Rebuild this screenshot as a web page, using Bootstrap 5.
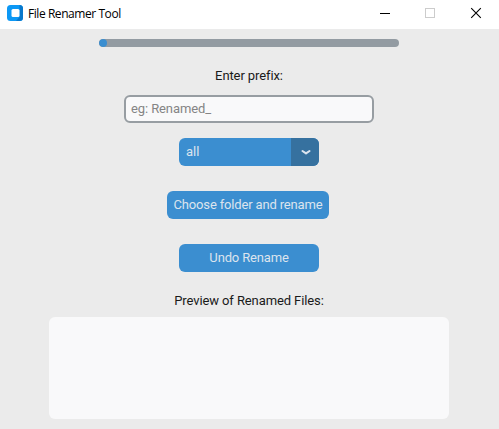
<!DOCTYPE html>
<html lang="en">
<head>
<meta charset="utf-8">
<meta name="viewport" content="width=device-width, initial-scale=1">
<title>File Renamer Tool</title>
<link href="https://cdn.jsdelivr.net/npm/bootstrap@5.3.0/dist/css/bootstrap.min.css" rel="stylesheet">
<style>
  body { background: #ebebeb; font: 13px/16px Roboto, sans-serif; color: #1a1a1a; overflow: hidden; }
  .titlebar { height: 29px; padding-left: 7px; color: #000; }
  .titlebar-text { font: 12px/16px "Open Sans", "Noto Sans", sans-serif; margin: 0 0 2px 5px; letter-spacing: -.44px; }
  .app-icon { margin-bottom: 3px; }
  .win-btn { width: 46px; height: 29px; }
  .app-body { width: 498px; padding-top: 10px; }
  .rename-progress { width: 300px; height: 8px; border-radius: 4px; background: #939ba2; }
  .rename-progress .progress-bar { width: 8px; border-radius: 4px; background: #3b8ed0; }
  .field-label { height: 28px; margin-top: 15px; letter-spacing: -.1px; }
  .prefix-input { width: 250px; height: 28px; margin-top: 5px; border: 2px solid #979da2; border-radius: 6px; background: #f9f9fa; padding: 0 5px 2px; font-size: 13px; line-height: 16px; letter-spacing: -.1px; }
  .prefix-input::placeholder { color: #858585; }
  .ctk-btn, .ctk-btn:hover { height: 28px; width: 140px; margin-top: 25px; padding: 0; border: 0; border-radius: 6px; background: #3b8ed0; color: #dce4ee; font-size: 13px; line-height: 16px; letter-spacing: -.16px; }
  .ctk-btn.ctk-menu { margin-top: 15px; }
  .ctk-btn.ctk-wide { width: 162px; margin-right: 2px; }
  .menu-value { padding-left: 7px; letter-spacing: 0; }
  .menu-arrow { width: 28px; padding-left: 1px; background: #36719f; }
  .preview-box { width: 400px; height: 102px; margin-top: 2px; border: 0; border-radius: 6px; background: #f9f9fa; resize: none; }
</style>
</head>
<body>
<header class="titlebar bg-white d-flex align-items-center">
  <svg class="app-icon" width="16" height="16" viewBox="0 0 16 16" aria-hidden="true">
    <rect width="16" height="16" rx="3.5" fill="#0c98f5"/>
    <path d="M12.5 0Q16 0 16 3.5V12.5Q16 16 12.5 16H9L12.5 12Z" fill="#0878cc"/>
    <rect x="4.5" y="4" width="8" height="8" rx="1.5" fill="#fff"/>
  </svg>
  <span class="titlebar-text">File Renamer Tool</span>
  <div class="d-flex ms-auto">
    <svg class="win-btn" viewBox="0 0 46 29"><path d="M19 13.5h10" stroke="#000"/></svg>
    <svg class="win-btn" viewBox="0 0 46 29"><rect x="18.5" y="8.5" width="9" height="9" fill="none" stroke="#ccc"/></svg>
    <svg class="win-btn" viewBox="0 0 46 29"><path d="M18.2 8.2l9.6 9.6M27.8 8.2l-9.6 9.6" stroke="#000" stroke-width="1.1"/></svg>
  </div>
</header>
<main class="app-body d-flex flex-column align-items-center">
  <div class="progress rename-progress"><div class="progress-bar"></div></div>
  <label class="field-label d-flex align-items-center" for="prefix">Enter prefix:</label>
  <input id="prefix" class="form-control prefix-input" placeholder="eg: Renamed_">
  <button class="btn ctk-btn ctk-menu d-flex overflow-hidden text-start">
    <span class="menu-value flex-grow-1 align-self-center">all</span>
    <span class="menu-arrow align-self-stretch d-flex align-items-center justify-content-center">
      <svg width="10" height="6" viewBox="0 0 10 6"><path d="M1.5 2L5 4.4L8.5 2" fill="none" stroke="#dce4ee" stroke-width="2.1" stroke-linecap="round" stroke-linejoin="round"/></svg>
    </span>
  </button>
  <button class="btn ctk-btn ctk-wide">Choose folder and rename</button>
  <button class="btn ctk-btn">Undo Rename</button>
  <label class="field-label d-flex align-items-center" for="preview">Preview of Renamed Files:</label>
  <textarea id="preview" class="form-control preview-box"></textarea>
</main>
<script src="https://cdn.jsdelivr.net/npm/bootstrap@5.3.0/dist/js/bootstrap.bundle.min.js"></script>
</body>
</html>
